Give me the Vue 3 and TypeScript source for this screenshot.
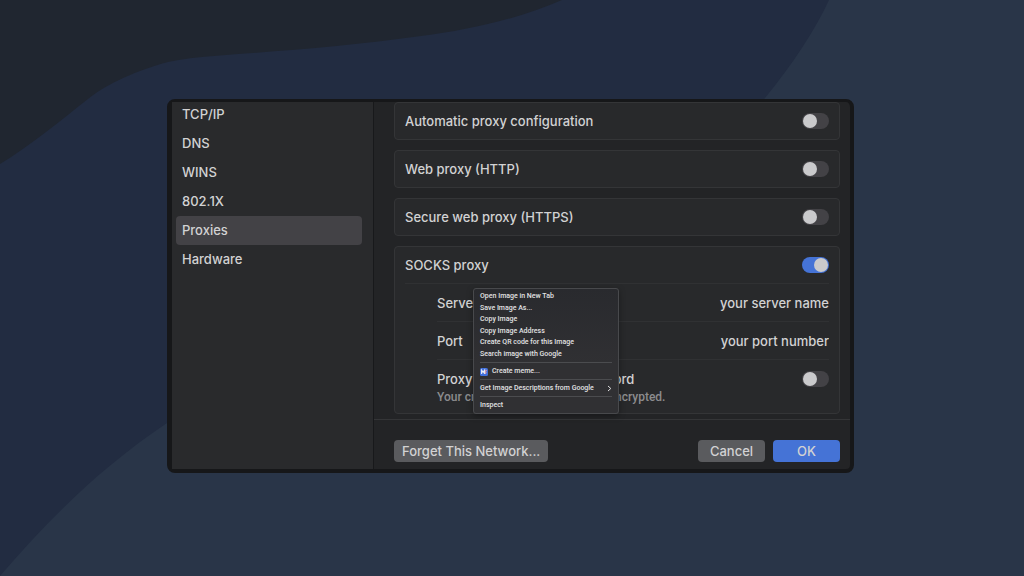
<script setup lang="ts">
import { ref } from 'vue'

const tabs = ['TCP/IP', 'DNS', 'WINS', '802.1X', 'Proxies', 'Hardware']
const activeTab = ref('Proxies')

const proxies = ref([
  { id: 'auto', label: 'Automatic proxy configuration', on: false },
  { id: 'http', label: 'Web proxy (HTTP)', on: false },
  { id: 'https', label: 'Secure web proxy (HTTPS)', on: false },
])

const socksOn = ref(true)
const needsPassword = ref(false)
const server = ref('your server name')
const port = ref('your port number')

const imageActions = [
  'Open Image in New Tab',
  'Save Image As...',
  'Copy Image',
  'Copy Image Address',
  'Create QR code for this Image',
  'Search image with Google',
]
</script>

<template>
  <div class="stage">
    <svg class="backdrop" viewBox="0 0 1024 576" preserveAspectRatio="none" aria-hidden="true">
      <path fill="#202630" d="M0 0H562C515 20 468 30 421 36C350 46 280 51 214 56C198 57 182 59 168 62C128 73 103 87 88 99C60 121 30 146 0 164Z" />
      <path fill="#293548" d="M829 0C815 30 793 64 765 98C640 260 350 300 167 423C100 468 50 518 0 576H1024V0Z" />
    </svg>

    <main class="window">
      <nav class="sidebar" aria-label="Network settings">
        <ul class="tabs">
          <li v-for="tab in tabs" :key="tab">
            <button
              type="button"
              class="tab"
              :class="{ active: tab === activeTab }"
              @click="activeTab = tab"
            >{{ tab }}</button>
          </li>
        </ul>
      </nav>

      <section class="content">
        <div class="groups">
          <div v-for="p in proxies" :key="p.id" class="group row">
            <label :for="p.id">{{ p.label }}</label>
            <input :id="p.id" v-model="p.on" class="switch" type="checkbox" role="switch" />
          </div>

          <div class="group socks">
            <div class="row">
              <label for="socks">SOCKS proxy</label>
              <input id="socks" v-model="socksOn" class="switch" type="checkbox" role="switch" />
            </div>
            <hr class="rule" />
            <div class="row field">
              <label for="server">Server</label>
              <input id="server" v-model="server" class="value" type="text" />
            </div>
            <hr class="rule inset" />
            <div class="row field">
              <label for="port">Port</label>
              <input id="port" v-model="port" class="value" type="text" />
            </div>
            <hr class="rule inset" />
            <div class="row field last">
              <div>
                <label for="password">Proxy server requires password</label>
                <p class="note">Your credentials may be sent unencrypted.</p>
              </div>
              <input id="password" v-model="needsPassword" class="switch" type="checkbox" role="switch" />
            </div>

            <div class="menu" role="menu">
              <div class="actions">
                <button v-for="a in imageActions" :key="a" type="button" role="menuitem">{{ a }}</button>
              </div>
              <hr />
              <button type="button" role="menuitem">
                <svg class="meme" viewBox="0 0 8 8" aria-hidden="true">
                  <rect width="8" height="8" rx="1.5" fill="#3f6fdc" />
                  <path d="M1.6 6V2.2L3.2 4.4L4.6 2.2V6" fill="none" stroke="#e6eaf5" stroke-width="1.1" />
                  <path d="M5.6 6V2.3H7M5.6 4.2H6.6" fill="none" stroke="#d99bb0" stroke-width="1" />
                </svg>
                Create meme...
              </button>
              <hr />
              <button type="button" role="menuitem" aria-haspopup="menu">
                Get Image Descriptions from Google
                <svg class="chevron" viewBox="0 0 5 7" aria-hidden="true">
                  <path d="M1 1L3.8 3.5L1 6" fill="none" stroke="#dededf" stroke-width="1" />
                </svg>
              </button>
              <hr />
              <button type="button" role="menuitem">Inspect</button>
            </div>
          </div>
        </div>

        <footer class="footer">
          <button type="button" class="btn forget">Forget This Network...</button>
          <button type="button" class="btn">Cancel</button>
          <button type="button" class="btn primary">OK</button>
        </footer>
      </section>
    </main>
  </div>
</template>

<style>
body {
  margin: 0;
  background: #222c41;
}
</style>

<style scoped>
.stage {
  position: relative;
  box-sizing: border-box;
  min-height: 100vh;
  padding: 99px 170px 99px 167px;
  background: #222c41;
  font-family: Inter, "Liberation Sans", sans-serif;
  font-size: 13px;
  font-weight: 500;
  line-height: 16px;
  color: #d2d2d3;
}

.backdrop {
  position: absolute;
  inset: 0;
  width: 100%;
  height: 100%;
}

button,
input {
  font: inherit;
  color: inherit;
}

.window {
  position: relative;
  display: flex;
  border: solid #161719;
  border-width: 3px 4px 4px 5px;
  border-radius: 8px;
  background: #232426;
}

.sidebar {
  flex: none;
  box-sizing: border-box;
  width: 202px;
  padding: 0 11px 0 4px;
  overflow: hidden;
  background: #292a2c;
  border-right: 1px solid #18191b;
}

.tabs {
  margin: -2px 0 0;
  padding: 0;
  list-style: none;
}

.tab {
  display: block;
  width: 100%;
  height: 29px;
  padding: 0 6px 2px;
  border: 0;
  border-radius: 4px;
  background: none;
  text-align: left;
}

.tab.active {
  background: #434246;
}

.content {
  flex: 1;
  min-width: 0;
}

.groups {
  display: flex;
  flex-direction: column;
  gap: 10px;
  padding: 0 10px 5px 20px;
}

.group {
  border: 1px solid #343537;
  border-radius: 4px;
  background: #28292b;
}

.row {
  display: flex;
  align-items: center;
  justify-content: space-between;
  height: 36px;
  padding: 0 10px;
}

.socks {
  position: relative;
}

.rule {
  height: 1px;
  margin: 0 10px;
  border: 0;
  background: #303133;
}

.rule.inset,
.field {
  margin-left: 42px;
}

.field {
  height: 37px;
  padding-left: 0;
}

.last {
  box-sizing: border-box;
  height: 53px;
  align-items: flex-start;
  padding-top: 11px;
}

.note {
  margin: 2px 0 0;
  font-family: Roboto, "Liberation Sans", sans-serif;
  font-size: 12px;
  color: #8c8c8e;
}

.value {
  width: 160px;
  padding: 0;
  border: 0;
  outline: 0;
  background: none;
  text-align: right;
}

.switch {
  appearance: none;
  flex: none;
  box-sizing: border-box;
  width: 27px;
  height: 16px;
  margin: 0;
  padding: 1px;
  border-radius: 8px;
  background: #434246;
}

.switch::before {
  content: "";
  display: block;
  width: 14px;
  height: 14px;
  border-radius: 50%;
  background: #cacacc;
}

.switch:checked {
  background: #4573d6;
}

.switch:checked::before {
  margin-left: auto;
}

.menu {
  position: absolute;
  left: 78px;
  top: 41px;
  box-sizing: border-box;
  width: 146px;
  padding: 2px 6px;
  border: 1px solid #48494c;
  border-radius: 3px;
  background: linear-gradient(#292a2e, #303033 60%);
  box-shadow: 0 2px 6px rgb(0 0 0 / 35%);
  font-family: Roboto, "Liberation Sans", sans-serif;
  font-size: 7px;
  line-height: 11px;
  color: #e2e2e3;
}

.actions {
  display: grid;
  grid-auto-rows: 1fr;
  height: 69px;
}

.menu button {
  display: flex;
  align-items: center;
  width: 100%;
  height: 11px;
  padding: 0;
  border: 0;
  background: none;
  text-align: left;
  white-space: nowrap;
}

.menu .actions button {
  height: auto;
}

.menu hr {
  height: 1px;
  margin: 2px 0 3px;
  border: 0;
  background: #4b4c4f;
}

.meme {
  width: 8px;
  height: 8px;
  margin-right: 4px;
}

.chevron {
  width: 5px;
  height: 7px;
  margin-left: auto;
}

.footer {
  display: flex;
  gap: 8px;
  padding: 20px 10px 7px 20px;
  border-top: 1px solid #343537;
}

.btn {
  min-width: 67px;
  height: 22px;
  padding: 0 8px;
  border: 0;
  border-radius: 4px;
  background: #5a5b5e;
  line-height: 22px;
}

.forget {
  margin-right: auto;
}

.primary {
  background: #4573d6;
}
</style>
